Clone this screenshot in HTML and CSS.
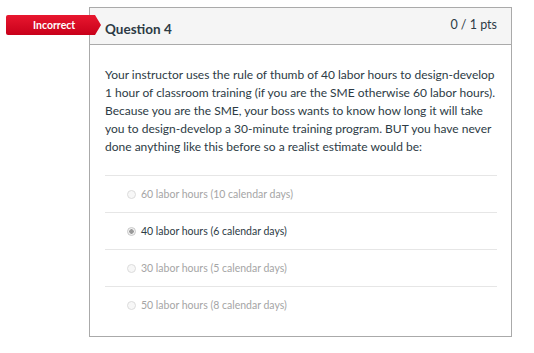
FILE: index.html
```html
<!DOCTYPE html>
<html lang="en">
<head>
    <meta charset="UTF-8">
    <title>Question 4</title>
    <link rel="stylesheet" href="styles.css">
</head>
<body>
    <div id="quiz">
        <div class="badge">Incorrect</div>
        <div class="question">
            <div class="qhead">
                <span class="qname">Question 4</span>
                <span class="qpts">0 / 1 pts</span>
            </div>
            <div class="qbody">
                <p class="qtext">Your instructor uses the rule of thumb of 40 labor hours to design-develop 1 hour of classroom training (if you are the SME otherwise 60 labor hours). Because you are the SME, your boss wants to know how long it will take you to design-develop a 30-minute training program. BUT you have never done anything like this before so a realist estimate would be:</p>
                <div class="answers">
                    <div class="answer"><span class="radio"></span>60 labor hours (10 calendar days)</div>
                    <div class="answer picked"><span class="radio"></span>40 labor hours (6 calendar days)</div>
                    <div class="answer"><span class="radio"></span>30 labor hours (5 calendar days)</div>
                    <div class="answer"><span class="radio"></span>50 labor hours (8 calendar days)</div>
                </div>
            </div>
        </div>
    </div>
</body>
</html>
```
FILE: styles.css
```css
*{
    font-family: Lato, 'Open Sans', sans-serif;
    box-sizing: border-box;
}

body{
    margin: 0;
    background-color: white;
    color: #2d3b45;
}

#quiz{
    position: relative;
    padding: 7px 0 0 89px;
    width: 512px;
}

.badge{
    position: absolute;
    left: 6px;
    top: 15px;
    width: 95px;
    height: 20px;
    line-height: 20px;
    padding-left: 27px;
    color: white;
    font-size: 10.5px;
    font-weight: 700;
    background: linear-gradient(#e8172f, #c8001a);
    clip-path: polygon(0 0, 89px 0, 95px 50%, 89px 100%, 0 100%);
    border-radius: 2px 0 0 2px;
}

.question{
    border: 1px solid #aaaaaa;
    height: 330px;
}

.qhead{
    display: flex;
    justify-content: space-between;
    align-items: center;
    height: 37px;
    padding: 0 14px 0 15px;
    background-color: #f5f5f5;
    border-bottom: 1px solid #aaaaaa;
}

.qname{
    font-size: 13.5px;
    font-weight: 700;
    color: #2d3b45;
    margin-top: 5px;
}

.qpts{
    font-size: 12.5px;
    color: #2d3b45;
    margin-top: -4px;
}

.qbody{
    padding: 21px 14px 0 15px;
}

.qtext{
    margin: 0 0 19px 0;
    font-size: 12px;
    line-height: 18px;
}

.answer{
    display: flex;
    align-items: center;
    height: 37px;
    padding-left: 22px;
    border-top: 1px solid #e6e6e6;
    font-size: 10.5px;
    color: #a5a5a5;
}

.answer.picked{
    color: #2d3b45;
}

.radio{
    width: 9px;
    height: 9px;
    margin-right: 5px;
    border: 1px solid #dcdcdc;
    border-radius: 50%;
    background-color: #f7f7f7;
}

.picked .radio{
    border-color: #c8c8c8;
    background: radial-gradient(circle, #9a9a9a 0 2px, #f2f2f2 2.5px);
}
```
